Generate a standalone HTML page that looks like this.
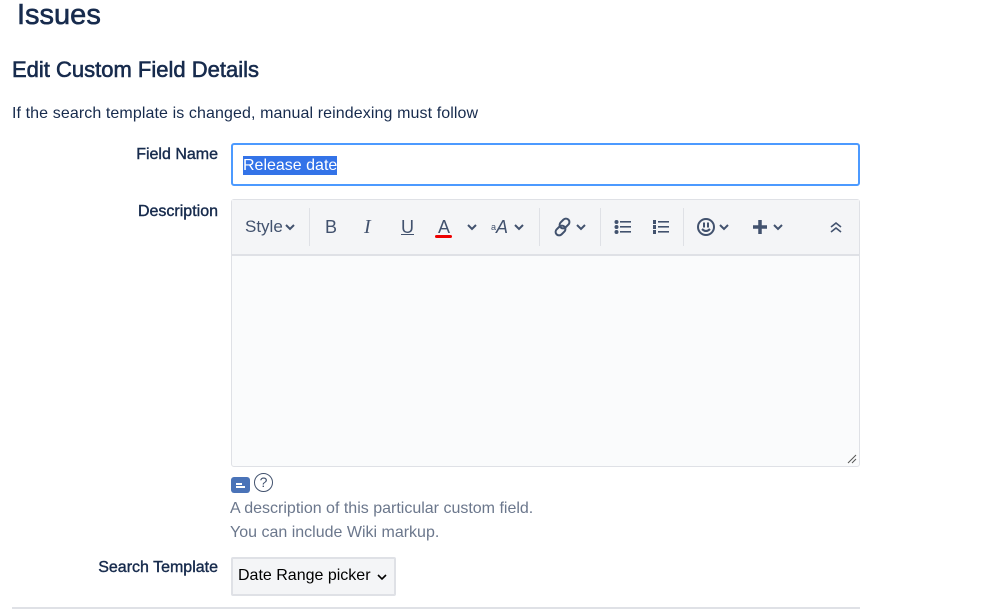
<!DOCTYPE html>
<html><head><style>
body{margin:0;background:#fff;font-family:"Liberation Sans",sans-serif;color:#172b4d;width:999px;height:613px;overflow:hidden;position:relative}
.a{position:absolute;white-space:nowrap}
.lbl{font-size:16px;color:#172b4d;text-align:right;width:206px;left:12px;-webkit-text-stroke:0.4px #172b4d}
.tb{position:absolute;top:0;height:54px;display:flex;align-items:center;font-size:18px;color:#42526e}
.sep{position:absolute;top:8px;width:1px;height:38px;background:#dfe1e6}
svg{position:absolute}
</style></head><body>
<div class="a" style="left:17px;top:-1px;font-size:29px;color:#172b4d;-webkit-text-stroke:0.6px #172b4d">Issues</div>
<div class="a" style="left:12px;top:57px;font-size:22px;color:#172b4d;-webkit-text-stroke:0.6px #172b4d">Edit Custom Field Details</div>
<div class="a" style="left:12px;top:105px;font-size:16px;letter-spacing:0.1px;color:#172b4d">If the search template is changed, manual reindexing must follow</div>
<div class="a lbl" style="top:146px">Field Name</div>
<div class="a" style="left:231px;top:143px;width:625px;height:39px;border:2px solid #4c9aff;border-radius:3px;background:#fff"></div>
<div class="a" style="left:243px;top:156px;font-size:16px;color:#fff;background:#3373e8;line-height:19px">Release date</div>
<div class="a lbl" style="top:203px">Description</div>
<div class="a" style="left:231px;top:199px;width:627px;height:266px;border:1px solid #dfe1e6;border-radius:3px;background:#fafbfc">
 <div style="position:absolute;left:0;top:0;width:627px;height:54px;background:#f4f5f7;border-bottom:2px solid #dfe1e6"></div>
 <div class="tb" style="left:13px;font-size:17px">Style</div>
 <svg style="left:53px;top:23px" width="10" height="8"><path d="M1 2l4 4 4-4" stroke="#42526e" stroke-width="2" fill="none"/></svg>
 <div class="sep" style="left:77px"></div>
 <div class="tb" style="left:93px">B</div>
 <div class="tb" style="left:132px;font-style:italic;font-family:'Liberation Serif',serif;font-size:20px">I</div>
 <div class="tb" style="left:169px;text-decoration:underline">U</div>
 <div class="tb" style="left:206px">A</div>
 <div style="position:absolute;left:203px;top:35px;width:17px;height:3px;background:#e00;border-radius:2px"></div>
 <svg style="left:235px;top:23px" width="10" height="8"><path d="M1 2l4 4 4-4" stroke="#42526e" stroke-width="2" fill="none"/></svg>
 <div class="tb" style="left:259px;font-style:italic"><sup style="font-size:9px;font-style:normal">a</sup>A</div>
 <svg style="left:282px;top:23px" width="10" height="8"><path d="M1 2l4 4 4-4" stroke="#42526e" stroke-width="2" fill="none"/></svg>
 <div class="sep" style="left:307px"></div>
 <svg style="left:320px;top:16px" width="22" height="22" viewBox="0 0 22 22"><g stroke="#42526e" stroke-width="2" fill="none"><rect x="9" y="2" width="7" height="11" rx="3.5" transform="rotate(45 12.5 7.5)"/><rect x="5" y="9" width="7" height="11" rx="3.5" transform="rotate(45 8.5 14.5)"/></g></svg>
 <svg style="left:344px;top:23px" width="10" height="8"><path d="M1 2l4 4 4-4" stroke="#42526e" stroke-width="2" fill="none"/></svg>
 <div class="sep" style="left:368px"></div>
 <svg style="left:382px;top:19px" width="18" height="16"><g fill="#42526e"><circle cx="2.5" cy="3" r="2"/><circle cx="2.5" cy="8" r="2"/><circle cx="2.5" cy="13" r="2"/><rect x="6" y="2" width="11" height="1.6"/><rect x="6" y="7" width="11" height="1.6"/><rect x="6" y="12" width="11" height="1.6"/></g></svg>
 <svg style="left:420px;top:19px" width="18" height="16"><g fill="#42526e"><rect x="1" y="1" width="3" height="4"/><rect x="1" y="6" width="3" height="4"/><rect x="1" y="11" width="3" height="4"/><rect x="6" y="2" width="11" height="1.6"/><rect x="6" y="7" width="11" height="1.6"/><rect x="6" y="12" width="11" height="1.6"/></g></svg>
 <div class="sep" style="left:451px"></div>
 <svg style="left:464px;top:17px" width="20" height="20"><circle cx="10" cy="10" r="8" stroke="#42526e" stroke-width="2" fill="none"/><rect x="7" y="5.5" width="2" height="5" fill="#42526e"/><rect x="11" y="5.5" width="2" height="5" fill="#42526e"/><path d="M6 12q4 4 8 0" stroke="#42526e" stroke-width="2" fill="none"/></svg>
 <svg style="left:487px;top:23px" width="10" height="8"><path d="M1 2l4 4 4-4" stroke="#42526e" stroke-width="2" fill="none"/></svg>
 <svg style="left:520px;top:19px" width="16" height="16"><path d="M8 1v14M1 8h14" stroke="#42526e" stroke-width="3.5"/></svg>
 <svg style="left:541px;top:23px" width="10" height="8"><path d="M1 2l4 4 4-4" stroke="#42526e" stroke-width="2" fill="none"/></svg>
 <svg style="left:598px;top:21px" width="12" height="12"><path d="M1 6l5-4 5 4M1 11l5-4 5 4" stroke="#42526e" stroke-width="1.6" fill="none"/></svg>
 <svg style="left:613px;top:252px" width="12" height="12"><path d="M3 11l8-8M7 11l4-4" stroke="#555" stroke-width="1"/></svg>
</div>
<div class="a" style="left:231px;top:477px;width:19px;height:16px;background:#4a73b8;border-radius:3px"><div style="position:absolute;left:5px;top:6px;width:6px;height:1.5px;background:#fff"></div><div style="position:absolute;left:5px;top:9px;width:9px;height:1.5px;background:#fff"></div></div>
<div class="a" style="left:254px;top:473px;width:17px;height:17px;border:1.5px solid #42526e;border-radius:50%;font-size:14px;text-align:center;line-height:17px;color:#42526e">?</div>
<div class="a" style="left:230px;top:500px;font-size:16px;color:#6b778c">A description of this particular custom field.</div>
<div class="a" style="left:230px;top:524px;font-size:16px;color:#6b778c">You can include Wiki markup.</div>
<div class="a lbl" style="top:559px">Search Template</div>
<div class="a" style="left:231px;top:557px;width:161px;height:35px;border:2px solid #dfe1e6;background:#f4f5f7;border-radius:2px"></div>
<div class="a" style="left:238px;top:567px;font-size:16px;color:#000">Date Range picker</div>
<svg style="left:377px;top:573px" width="10" height="8"><path d="M1 2l4 4 4-4" stroke="#000" stroke-width="1.6" fill="none"/></svg>
<div class="a" style="left:12px;top:607px;width:848px;height:2px;background:#dfe1e6"></div>
</body></html>
